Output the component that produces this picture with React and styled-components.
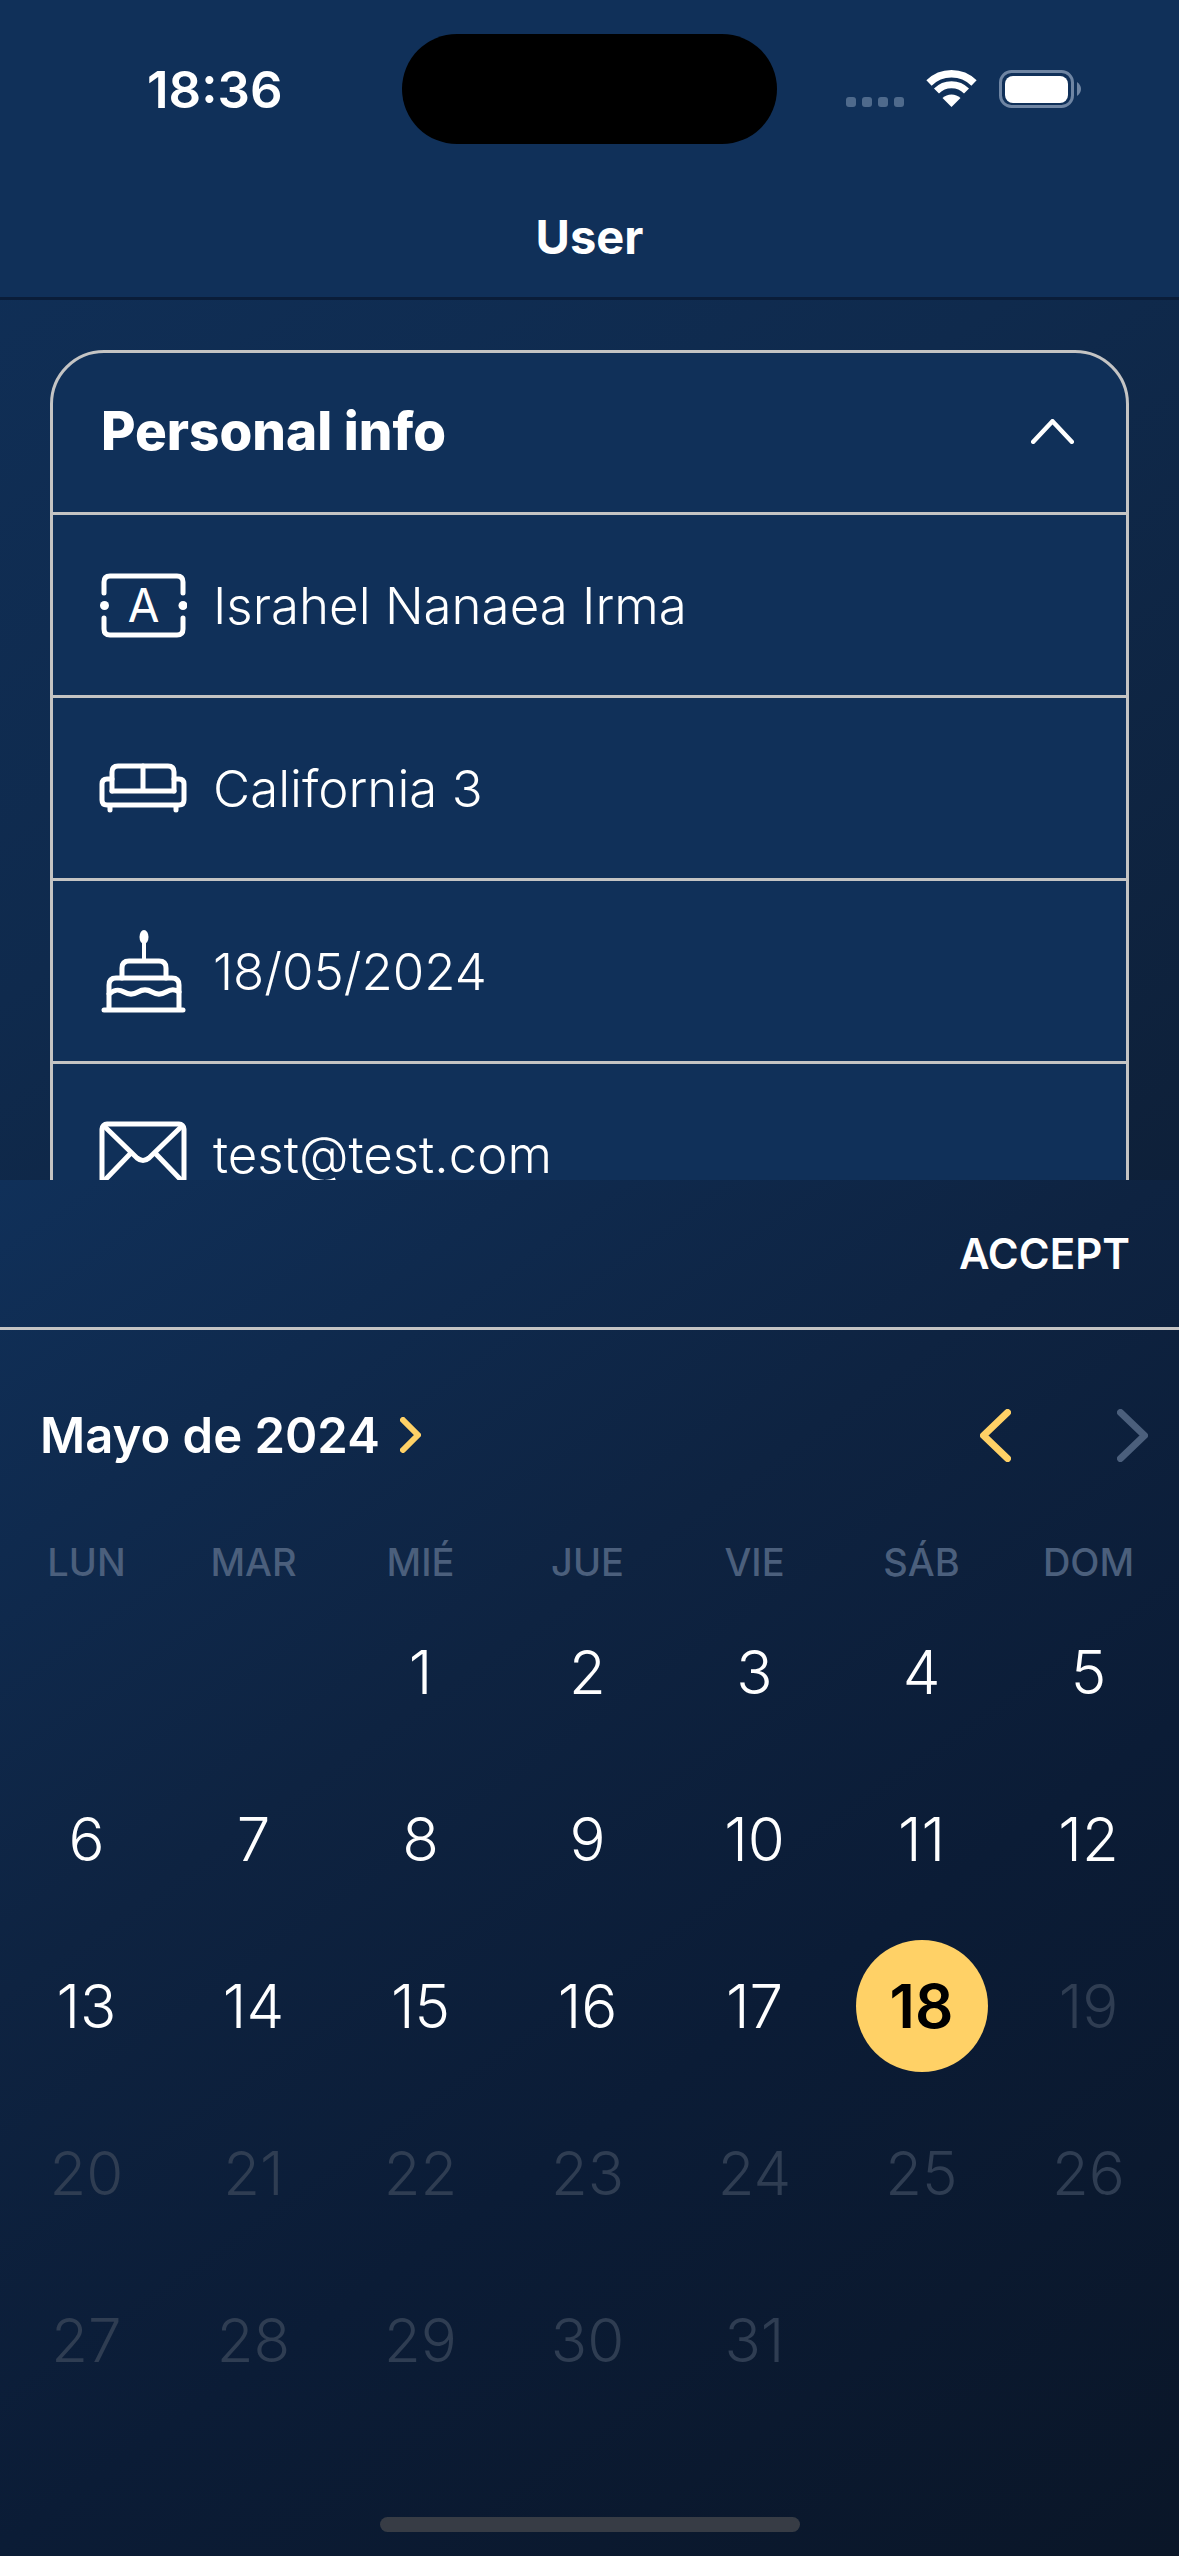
import React from "react";
import styled, { createGlobalStyle } from "styled-components";

const color = {
  navy: "#103059",
  line: "#c4c4c4",
  yellow: "#ffd166",
  muted: "#4b5f7c",
  faded: "#2f3d52",
};

const GlobalStyle = createGlobalStyle`
  html, body {
    margin: 0;
    padding: 0;
    background: #0a1628;
  }
  * {
    box-sizing: border-box;
  }
`;

const Screen = styled.div`
  display: flex;
  flex-direction: column;
  width: 1179px;
  height: 2556px;
  overflow: hidden;
  color: #fff;
  font-family: Inter, "Liberation Sans", sans-serif;
`;

const TopArea = styled.div`
  height: 1180px;
  flex: none;
  overflow: hidden;
  background: linear-gradient(145deg, #103059 0%, #0f2a4d 50%, #0e2039 100%);
`;

const Header = styled.header`
  background-color: ${color.navy};
  border-bottom: 3px solid #0a1d39;
`;

const StatusBar = styled.div`
  display: grid;
  grid-template-columns: 402px 375px 1fr;
  align-items: center;
  height: 178px;
`;

const Time = styled.span`
  padding-left: 147px;
  font-size: 51px;
  font-weight: 600;
`;

const Island = styled.div`
  height: 110px;
  border-radius: 55px;
  background: #000;
`;

const StatusIcons = styled.div`
  display: flex;
  align-items: flex-end;
  padding-left: 69px;
`;

const Dots = styled.svg`
  margin-right: 22px;
`;

const Wifi = styled.svg`
  margin-right: 22px;
`;

const Title = styled.div`
  display: flex;
  align-items: center;
  justify-content: center;
  height: 119px;
  padding-bottom: 2px;
  font-size: 47px;
  font-weight: 700;
`;

const Body = styled.main`
  padding: 50px 50px 0;
`;

const Card = styled.section`
  width: 1079px;
  border: 3px solid ${color.line};
  border-radius: 54px;
  background-color: ${color.navy};
`;

const CardHeader = styled.div`
  display: flex;
  align-items: center;
  justify-content: space-between;
  height: 159px;
  padding: 0 52px 3px 48px;
  font-size: 53px;
  font-weight: 800;
`;

const Row = styled.div`
  display: flex;
  align-items: center;
  gap: 25px;
  height: 183px;
  padding-left: 45px;
  border-top: 3px solid ${color.line};
  font-size: 51px;
  font-weight: 350;
`;

const IconSlot = styled.span`
  display: flex;
  justify-content: center;
  flex: none;
  width: 90px;
`;

const Sheet = styled.section`
  display: flex;
  flex-direction: column;
  flex: 1;
  background: linear-gradient(145deg, #103059 0%, #0e2341 37%, #0b1c36 62%, #0a1628 100%);
`;

const ActionBar = styled.div`
  display: flex;
  align-items: center;
  justify-content: flex-end;
  flex: none;
  height: 150px;
  padding-right: 49px;
  border-bottom: 3px solid ${color.line};
  font-size: 42px;
  font-weight: 600;
`;

const MonthBar = styled.div`
  display: flex;
  align-items: center;
  justify-content: space-between;
  flex: none;
  height: 110px;
  margin-top: 50px;
  padding: 0 31px 0 40px;
`;

const MonthLabel = styled.div`
  display: flex;
  align-items: center;
  gap: 20px;
  font-size: 49px;
  font-weight: 600;
`;

const MonthArrows = styled.div`
  display: flex;
  align-items: center;
  gap: 106px;
`;

const CalendarGrid = styled.div`
  display: grid;
  grid-template-columns: repeat(7, 167px);
  padding-left: 3px;
`;

const WeekDays = styled(CalendarGrid)`
  flex: none;
  height: 52px;
  margin-top: 46px;
  align-items: center;
`;

const WeekDay = styled.div`
  color: ${color.muted};
  font-size: 38px;
  font-weight: 500;
  text-align: center;
`;

const Days = styled(CalendarGrid)`
  grid-auto-rows: 167px;
  flex: none;
`;

const Day = styled.div`
  display: flex;
  align-items: center;
  justify-content: center;
  color: ${({ $faded }) => ($faded ? color.faded : "#fff")};
  font-size: 60px;
  font-weight: 350;
`;

const SelectedDay = styled.div`
  display: flex;
  align-items: center;
  justify-content: center;
  width: 132px;
  height: 132px;
  border-radius: 50%;
  background-color: ${color.yellow};
  color: #000;
  font-weight: 600;
`;

const HomeBar = styled.div`
  flex: none;
  align-self: center;
  width: 420px;
  height: 15px;
  margin-top: auto;
  margin-bottom: 24px;
  border-radius: 8px;
  background-color: #373c45;
`;

const Line = ({ children, width, height, sw = 5 }) => (
  <svg
    width={width}
    height={height}
    viewBox={`0 0 ${width} ${height}`}
    fill="none"
    stroke="#fff"
    strokeWidth={sw}
    strokeLinecap="round"
    strokeLinejoin="round"
  >
    {children}
  </svg>
);

const NameIcon = () => (
  <Line width={87} height={65}>
    <path d="M4 20V9q0-6 6-6h67q6 0 6 6v11M4 45v11q0 6 6 6h67q6 0 6-6V45" />
    <circle cx="4.5" cy="32.5" r="4.5" fill="#fff" stroke="none" />
    <circle cx="83" cy="32.5" r="4.5" fill="#fff" stroke="none" />
    <text x="43.5" y="49" textAnchor="middle" fill="#fff" stroke="none" fontFamily="Inter" fontSize="46" fontWeight="400">
      A
    </text>
  </Line>
);

const SofaIcon = () => (
  <Line width={88} height={50}>
    <path d="M13 16V9q0-6 6-6h50q6 0 6 6v7" />
    <path d="M44 3v25M13 28h62" />
    <path d="M13 28V16H8q-5 0-5 5v16q0 5 5 5h72q5 0 5-5V21q0-5-5-5h-5v12" />
    <path d="M11 43v4M77 43v4" />
  </Line>
);

const CakeIcon = () => (
  <Line width={85} height={83}>
    <ellipse cx="43" cy="7" rx="4.5" ry="7" fill="#fff" stroke="none" />
    <path d="M43 13v17" strokeWidth="4" />
    <path d="M21 48V38q0-7 7-7h30q7 0 7 7v10" />
    <path d="M8 79V55q0-7 7-7h56q7 0 7 7v24" />
    <path d="M8 64c6-5 10-5 15-2s9 3 14 0 9-3 14 0 9 3 14 0 9-3 13 0" />
    <path d="M3 80h79" />
  </Line>
);

const MailIcon = () => (
  <Line width={88} height={66}>
    <rect x="3" y="3" width="82" height="60" rx="5" />
    <path d="M5 5l33 32q6 5 12 0L83 5" />
    <path d="M5 60l26-27M83 60L57 33" />
  </Line>
);

const Chevron = ({ dir = "right", stroke, width, height, sw }) => {
  const points = {
    right: `M${sw / 2} ${sw / 2}L${width - sw / 2} ${height / 2}L${sw / 2} ${height - sw / 2}`,
    left: `M${width - sw / 2} ${sw / 2}L${sw / 2} ${height / 2}L${width - sw / 2} ${height - sw / 2}`,
    up: `M${sw / 2} ${height - sw / 2}L${width / 2} ${sw / 2}L${width - sw / 2} ${height - sw / 2}`,
  };
  return (
    <svg width={width} height={height} viewBox={`0 0 ${width} ${height}`} fill="none">
      <path d={points[dir]} stroke={stroke} strokeWidth={sw} strokeLinecap="round" strokeLinejoin="round" />
    </svg>
  );
};

const infoRows = [
  { icon: <NameIcon />, text: "Israhel Nanaea Irma" },
  { icon: <SofaIcon />, text: "California 3" },
  { icon: <CakeIcon />, text: "18/05/2024" },
  { icon: <MailIcon />, text: "test@test.com" },
];

const weekDays = ["LUN", "MAR", "MIÉ", "JUE", "VIE", "SÁB", "DOM"];

const SELECTED = 18;

export default function App() {
  return (
    <Screen>
      <GlobalStyle />
      <TopArea>
        <Header>
          <StatusBar>
            <Time>18:36</Time>
            <Island />
            <StatusIcons>
              <Dots width="58" height="12" viewBox="0 0 58 12" fill="#4f6a8c">
                <rect x="0" y="1" width="10" height="10" rx="3" />
                <rect x="16" y="1" width="10" height="10" rx="3" />
                <rect x="32" y="1" width="10" height="10" rx="3" />
                <rect x="48" y="1" width="10" height="10" rx="3" />
              </Dots>
              <Wifi width="51" height="38" viewBox="0 0 51 38" fill="none" stroke="#fff">
                <path d="M3 13A32 32 0 0 1 48 13" strokeWidth="7.5" />
                <path d="M10.5 21A21 21 0 0 1 40.5 21" strokeWidth="7" />
                <path d="M25.5 37L16.5 28A13 13 0 0 1 34.5 28Z" fill="#fff" stroke="none" />
              </Wifi>
              <svg width="82" height="38" viewBox="0 0 82 38">
                <rect x="1.5" y="1.5" width="72" height="35" rx="11" fill="none" stroke="#6f85a3" strokeWidth="3" />
                <rect x="6" y="6" width="63" height="27" rx="8" fill="#fff" />
                <path d="M78 12q4 3 4 7t-4 7z" fill="#6f85a3" />
              </svg>
            </StatusIcons>
          </StatusBar>
          <Title>User</Title>
        </Header>
        <Body>
          <Card>
            <CardHeader>
              Personal info
              <Chevron dir="up" stroke="#fff" width={43} height={25} sw={4.5} />
            </CardHeader>
            {infoRows.map((row) => (
              <Row key={row.text}>
                <IconSlot>{row.icon}</IconSlot>
                {row.text}
              </Row>
            ))}
          </Card>
        </Body>
      </TopArea>
      <Sheet>
        <ActionBar>ACCEPT</ActionBar>
        <MonthBar>
          <MonthLabel>
            Mayo de 2024
            <Chevron stroke={color.yellow} width={21} height={36} sw={6} />
          </MonthLabel>
          <MonthArrows>
            <Chevron dir="left" stroke={color.yellow} width={31} height={53} sw={7} />
            <Chevron stroke={color.muted} width={31} height={53} sw={7} />
          </MonthArrows>
        </MonthBar>
        <WeekDays>
          {weekDays.map((name) => (
            <WeekDay key={name}>{name}</WeekDay>
          ))}
        </WeekDays>
        <Days>
          {Array.from({ length: 2 }, (_, i) => (
            <Day key={`blank-${i}`} />
          ))}
          {Array.from({ length: 31 }, (_, i) => i + 1).map((day) => (
            <Day key={day} $faded={day > SELECTED}>
              {day === SELECTED ? <SelectedDay>{day}</SelectedDay> : day}
            </Day>
          ))}
        </Days>
        <HomeBar />
      </Sheet>
    </Screen>
  );
}
